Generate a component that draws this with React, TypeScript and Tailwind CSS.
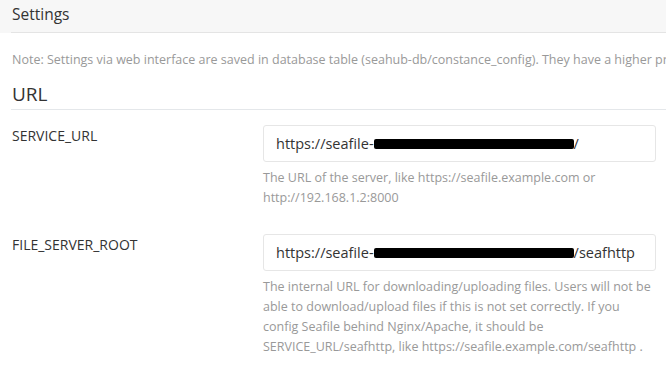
import React from 'react';

const font = { fontFamily: '"Open Sans", "Noto Sans", sans-serif' };

function Redacted({ width }: { width: number }) {
  return <span className="inline-block h-[10px] bg-black align-middle rounded-[2px]" style={{ width }} />;
}

export default function App() {
  return (
    <div className="w-[666px] h-[366px] bg-white overflow-hidden" style={font}>
      {/* Header */}
      <div className="bg-[#f7f7f7] h-[33px]">
        <div className="ml-[11px] h-[33px] border-b border-[#e4e4e4] pl-px pt-[4px] text-[15.5px] text-[#333] leading-[20px]">
          Settings
        </div>
      </div>

      <div className="pl-[11px]">
        <p className="pl-px mt-[17px] text-[12.5px] text-[#999] whitespace-nowrap leading-[20px]">
          Note: Settings via web interface are saved in database table (seahub-db/constance_config). They have a higher priority over the settings in config files.
        </p>

        <h3 className="pl-px mt-[11px] pb-[2px] text-[19px] text-[#333] leading-[26px] border-b border-[#e4e7ea]">URL</h3>

        {/* SERVICE_URL */}
        <div className="flex mt-[15px]">
          <div className="w-[252px] pl-px pt-[1px] text-[14px] text-[#333] leading-[20px]">SERVICE_URL</div>
          <div className="w-[393px]">
            <div className="h-[37px] border border-[#e6e6e6] rounded-[3px] flex items-center pl-[12px] text-[14.5px] text-[#333] whitespace-nowrap">
              https://seafile-<Redacted width={200} />/
            </div>
            <p className="mt-[6px] text-[12.5px] text-[#999] leading-[20px]">
              The URL of the server, like https://seafile.example.com or http://192.168.1.2:8000
            </p>
          </div>
        </div>

        {/* FILE_SERVER_ROOT */}
        <div className="flex mt-[26px]">
          <div className="w-[252px] pl-px pt-[1px] text-[14px] text-[#333] leading-[20px]">FILE_SERVER_ROOT</div>
          <div className="w-[393px]">
            <div className="h-[37px] border border-[#e6e6e6] rounded-[3px] flex items-center pl-[12px] text-[14.5px] text-[#333] whitespace-nowrap">
              https://seafile-<Redacted width={200} />/seafhttp
            </div>
            <p className="mt-[6px] text-[12.5px] text-[#999] leading-[20px] whitespace-nowrap">
              The internal URL for downloading/uploading files. Users will not be<br />
              able to download/upload files if this is not set correctly. If you<br />
              config Seafile behind Nginx/Apache, it should be<br />
              SERVICE_URL/seafhttp, like https://seafile.example.com/seafhttp .
            </p>
          </div>
        </div>
      </div>
    </div>
  );
}
